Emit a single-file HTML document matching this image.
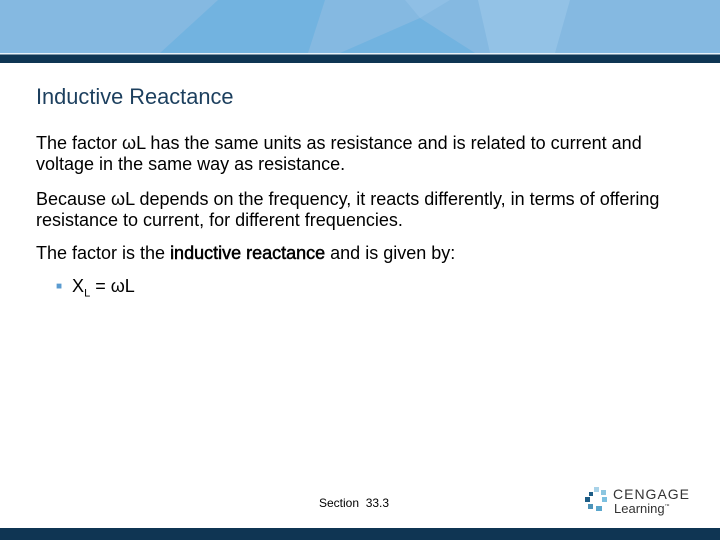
<html><head><style>
body{margin:0;width:720px;height:540px;position:relative;background:#fff;font-family:"Liberation Sans",sans-serif;overflow:hidden}
.t{position:absolute;left:36px;color:#000;font-size:18px;line-height:21px;white-space:nowrap}
</style></head><body>
<svg style="position:absolute;left:0;top:0" width="720" height="63">
<rect width="720" height="53" fill="#85b9e1"/>
<polygon points="218,0 325,0 308,53 160,53" fill="#72b3e0"/>
<polygon points="340,53 420,18 475,53" fill="#72b3e0"/>
<polygon points="405,0 450,0 420,18" fill="#8fbfe5"/>
<polygon points="478,0 570,0 555,53 490,53" fill="#93c2e6"/>
<rect y="53" width="720" height="1.5" fill="#e8f2fa"/>
<rect y="54.5" width="720" height="8.5" fill="#0f3553"/>
</svg>
<div class="t" style="top:85px;font-size:21.8px;line-height:24px;color:#1c3f5e">Inductive Reactance</div>
<div class="t" style="top:133px">The factor ωL has the same units as resistance and is related to current and<br>voltage in the same way as resistance.</div>
<div class="t" style="top:189px">Because ωL depends on the frequency, it reacts differently, in terms of offering<br>resistance to current, for different frequencies.</div>
<div class="t" style="top:243px">The factor is the <b style="font-weight:normal;-webkit-text-stroke:0.5px #000">inductive reactance</b> and is given by:</div>
<div class="t" style="top:276px;left:56px"><span style="color:#5a9bd0;font-size:10px;position:relative;top:-3px">■</span>&nbsp; X<sub style="font-size:11px">L</sub> = ωL</div>
<div style="position:absolute;left:319px;top:496px;font-size:12px">Section&nbsp; 33.3</div>
<svg style="position:absolute;left:584px;top:486px" width="30" height="30" viewBox="0 0 30 30">
<rect x="10" y="1" width="5" height="5" fill="#a8d2e8"/><rect x="17" y="4" width="5" height="5" fill="#8cc6e0"/>
<rect x="5" y="6" width="4" height="4" fill="#1e5d86"/><rect x="1" y="11" width="5" height="5" fill="#1e5d86"/>
<rect x="18" y="11" width="5" height="5" fill="#7cc0e0"/><rect x="4" y="18" width="5" height="5" fill="#4d93b8"/>
<rect x="12" y="20" width="6" height="5" fill="#5aa6cc"/>
</svg>
<div style="position:absolute;left:613px;top:486px;font-size:14px;letter-spacing:1px;color:#333">CENGAGE</div>
<div style="position:absolute;left:614px;top:501px;font-size:13px;color:#333">Learning<sup style="font-size:5px">™</sup></div>
<div style="position:absolute;left:0;top:528px;width:720px;height:12px;background:#0f3553"></div>
</body></html>
